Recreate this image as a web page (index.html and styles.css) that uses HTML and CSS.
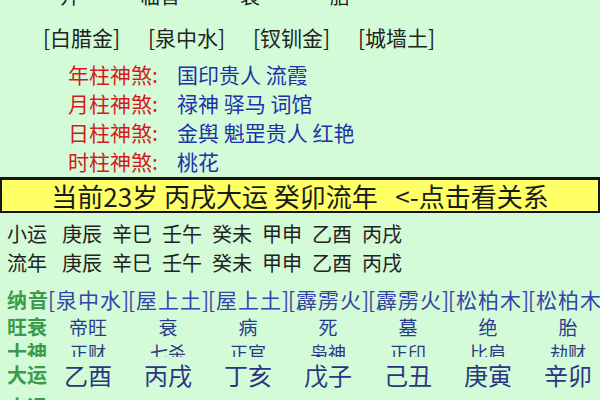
FILE: index.html
```html
<!DOCTYPE html>
<html lang="zh">
<head>
<meta charset="utf-8">
<link rel="stylesheet" href="styles.css">
</head>
<body>
<div class="page">
  <div class="top-row">
    <span class="tcell">开</span><span class="tcell">临官</span><span class="tcell">衰</span><span class="tcell">胎</span>
  </div>
  <div class="nayin-top">
    <span class="ncell">[白腊金]</span><span class="ncell">[泉中水]</span><span class="ncell">[钗钏金]</span><span class="ncell">[城墙土]</span>
  </div>
  <div class="shensha">
    <div class="ss-row"><span class="ss-label">年柱神煞:</span><span class="ss-val">国印贵人 流霞</span></div>
    <div class="ss-row"><span class="ss-label">月柱神煞:</span><span class="ss-val">禄神 驿马 词馆</span></div>
    <div class="ss-row"><span class="ss-label">日柱神煞:</span><span class="ss-val">金舆 魁罡贵人 红艳</span></div>
    <div class="ss-row"><span class="ss-label">时柱神煞:</span><span class="ss-val">桃花</span></div>
  </div>
  <div class="banner">当前23岁 丙戌大运 癸卯流年&nbsp;&nbsp;&nbsp;&lt;-点击看关系</div>
  <div class="yun">
    <div class="yun-row"><span class="yun-label">小运</span><span>庚辰</span><span>辛巳</span><span>壬午</span><span>癸未</span><span>甲申</span><span>乙酉</span><span>丙戌</span></div>
    <div class="yun-row"><span class="yun-label">流年</span><span>庚辰</span><span>辛巳</span><span>壬午</span><span>癸未</span><span>甲申</span><span>乙酉</span><span>丙戌</span></div>
  </div>
  <div class="table">
    <div class="trow nayin">
      <span class="lbl">纳音</span><span>[泉中水]</span><span>[屋上土]</span><span>[屋上土]</span><span>[霹雳火]</span><span>[霹雳火]</span><span>[松柏木]</span><span>[松柏木]</span>
    </div>
    <div class="trow wangshuai">
      <span class="lbl">旺衰</span><span>帝旺</span><span>衰</span><span>病</span><span>死</span><span>墓</span><span>绝</span><span>胎</span>
    </div>
    <div class="trow shishen">
      <span class="lbl">十神</span><span>正财</span><span>七杀</span><span>正官</span><span>枭神</span><span>正印</span><span>比肩</span><span>劫财</span>
    </div>
    <div class="trow dayun">
      <span class="lbl">大运</span><span>乙酉</span><span>丙戌</span><span>丁亥</span><span>戊子</span><span>己丑</span><span>庚寅</span><span>辛卯</span>
    </div>
    <div class="trow xiaoyun">
      <span class="lbl">小运</span>
    </div>
  </div>
</div>
</body>
</html>
```
FILE: styles.css
```css
html, body {
  margin: 0;
  padding: 0;
}
body {
  background: #d4fbd7;
}
.page {
  width: 600px;
  height: 400px;
  overflow: hidden;
  background: #d4fbd7;
  font-family: "Noto Sans CJK SC", "Noto Sans", sans-serif;
  color: #222;
}
.top-row {
  margin-top: -18px;
  height: 28px;
  line-height: 28px;
  font-size: 20px;
  display: flex;
  padding-left: 25px;
}
.tcell {
  width: 90px;
  text-align: center;
}
.nayin-top {
  padding-top: 13px;
  height: 28px;
  line-height: 28px;
  font-size: 21px;
  display: flex;
  padding-left: 43px;
}
.ncell {
  width: 105px;
  white-space: nowrap;
}
.shensha {
  margin-top: 9px;
  padding-left: 68px;
  font-size: 21px;
}
.ss-row {
  display: flex;
  height: 29px;
  line-height: 29px;
}
.ss-label {
  width: 109px;
  color: #d21c1c;
}
.ss-val {
  color: #1d33a8;
}
.banner {
  margin-top: 1px;
  height: 31px;
  line-height: 31px;
  background: #ffff66;
  border: 2px solid #151515;
  border-top-width: 3px;
  text-align: center;
  font-size: 26px;
  color: #1a1a1a;
  white-space: nowrap;
}
.yun {
  padding-top: 6px;
  padding-left: 7px;
  font-size: 20px;
}
.yun-row {
  display: flex;
  gap: 10px;
  height: 29px;
  line-height: 29px;
}
.yun-label {
  width: 45px;
}
.table {
  margin-top: 9px;
}
.trow {
  display: grid;
  grid-template-columns: 48px repeat(7, 80px);
  white-space: nowrap;
}
.trow > span {
  text-align: center;
}
.trow > .lbl {
  text-align: left;
  padding-left: 7px;
  color: #3b9a4b;
  font-weight: bold;
  font-size: 20px;
}
.nayin {
  height: 27px;
  line-height: 27px;
  font-size: 21px;
  color: #3344aa;
}
.nayin > span {
  letter-spacing: 1px;
}
.wangshuai {
  height: 27px;
  line-height: 27px;
  font-size: 19px;
  color: #2b3b8c;
}
.shishen {
  margin-top: 3px;
  height: 14px;
  overflow: hidden;
  align-items: end;
  font-size: 18px;
  color: #2b3a80;
}
.shishen > span {
  line-height: 18px;
}
.dayun {
  height: 36px;
  line-height: 36px;
  font-size: 24px;
  color: #2a3682;
}
.xiaoyun {
  height: 28px;
  line-height: 28px;
}
```
